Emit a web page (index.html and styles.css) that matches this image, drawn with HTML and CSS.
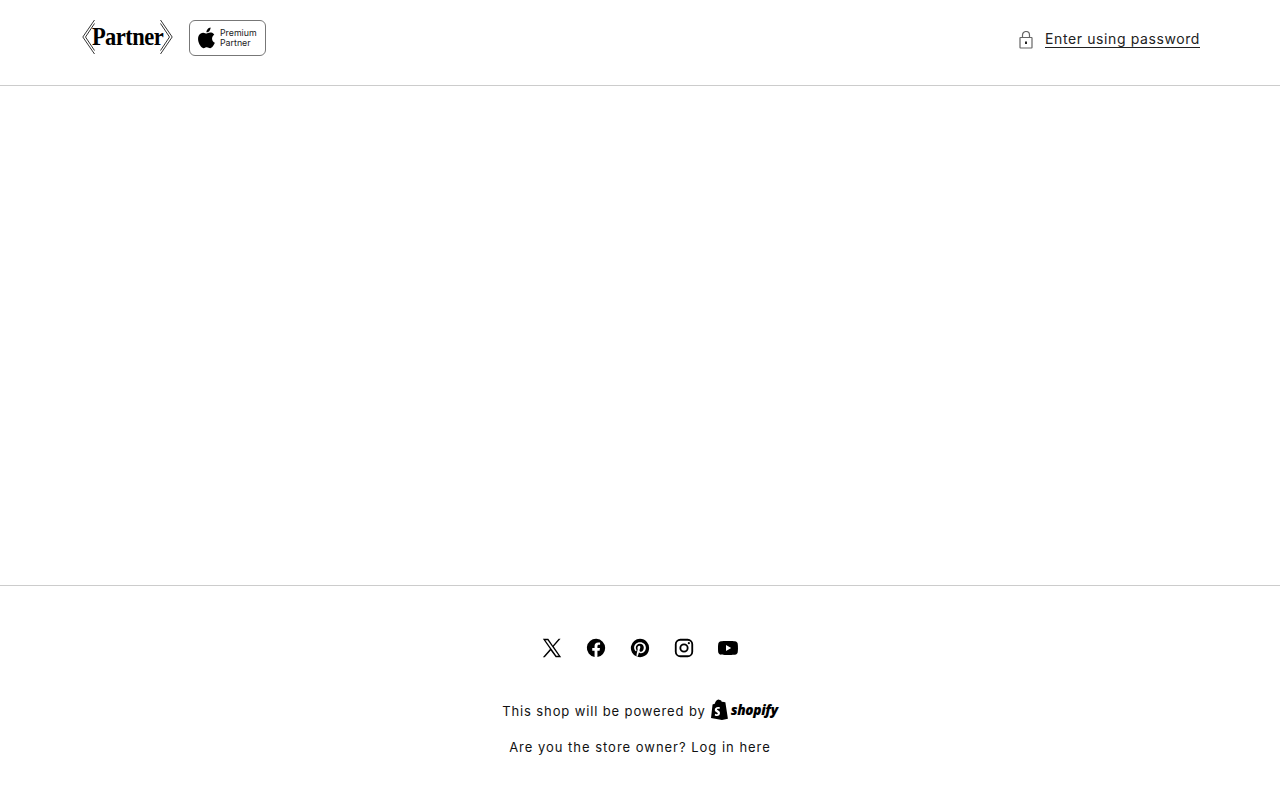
FILE: index.html
```html
<!DOCTYPE html>
<html>
<head>
<meta charset="utf-8">
	<title>Partner</title>
	<link rel="stylesheet" href="styles.css">
</head>
<body>
	<header class="header">
		<div class="logo">
			<div class="wordmark">
				<svg class="chevron" viewBox="0 0 13 34" width="13" height="34" fill="none" stroke="#000" stroke-width="0.8"><path d="M12.500 0 .8 17l11.700 17M12.500 3.500 3.500 17l9 13.500"/></svg>
				<span class="wordmark-text">Partner</span>
				<svg class="chevron" viewBox="0 0 13 34" width="13" height="34" fill="none" stroke="#000" stroke-width="0.8"><path d="M.5 0l11.700 17L.5 34M.5 3.500l9 13.500-9 13.500"/></svg>
			</div>
			<div class="badge">
				<svg class="apple" viewBox="0 0 24 24" width="24" height="24" fill="#000"><path d="M17.050 12.540c-.03-2.600 2.120-3.850 2.220-3.910-1.210-1.770-3.090-2.010-3.760-2.040-1.600-.16-3.120.94-3.930.94-.81 0-2.060-.92-3.390-.89-1.740.03-3.350 1.010-4.250 2.570-1.810 3.140-.46 7.800 1.300 10.350.86 1.250 1.890 2.650 3.240 2.600 1.300-.05 1.790-.84 3.360-.84 1.570 0 2.010.84 3.390.81 1.400-.02 2.280-1.270 3.140-2.520.99-1.450 1.400-2.850 1.420-2.920-.03-.01-2.720-1.040-2.740-4.150zM14.470 4.900c.72-.87 1.200-2.080 1.070-3.280-1.030.04-2.280.69-3.020 1.550-.66.770-1.240 2-1.090 3.180 1.150.09 2.330-.58 3.040-1.450z"/></svg>
				<span class="badge-text">Premium<br>Partner</span>
			</div>
		</div>
		<a class="password" href="#">
			<svg class="lock" viewBox="0 0 14 18" width="14" height="18" fill="none" stroke="#666" stroke-width="1.200"><rect x="1" y="6.500" width="12" height="10.500" rx="0.500"/><path d="M3.500 6.500V4a3.500 3.500 0 0 1 7 0v2.500"/><path d="M7 10.500v2.500" stroke="#222" stroke-width="2"/></svg>
			<span class="password-text">Enter using password</span>
		</a>
	</header>

	<main class="main"></main>

	<footer class="footer">
		<div class="social">
			<a href="#"><svg viewBox="0 0 24 24" width="22" height="22" fill="#000"><path fill-rule="evenodd" d="M13.900 10.470 21.350 2h-2.100l-6.300 7.150L7.950 2H2l7.810 11.130L2 22h2.100l6.500-7.400L16.050 22H22l-8.100-11.530zM4.800 3.600h2.400l12 16.900h-2.400L4.800 3.600z"/></svg></a>
			<a href="#"><svg viewBox="0 0 24 24" width="22" height="22" fill="#000"><path d="M22 12a10 10 0 1 0-11.560 9.880v-6.990H7.900V12h2.540V9.800c0-2.510 1.490-3.890 3.780-3.890 1.090 0 2.240.19 2.240.19v2.460h-1.260c-1.240 0-1.630.77-1.630 1.560V12h2.770l-.44 2.890h-2.330v6.990A10 10 0 0 0 22 12z"/></svg></a>
			<a href="#"><svg viewBox="0 0 24 24" width="22" height="22" fill="#000"><path d="M12 2a10 10 0 0 0-3.640 19.310c-.09-.79-.17-2 .03-2.870.18-.78 1.170-4.970 1.170-4.970s-.3-.6-.3-1.480c0-1.390.81-2.430 1.810-2.430.86 0 1.270.64 1.270 1.410 0 .86-.55 2.140-.83 3.330-.24 1 .5 1.810 1.480 1.810 1.780 0 3.150-1.880 3.150-4.590 0-2.400-1.730-4.080-4.190-4.080-2.850 0-4.530 2.140-4.530 4.350 0 .86.33 1.790.75 2.290.08.1.09.19.07.29l-.28 1.130c-.04.18-.15.22-.34.13-1.250-.58-2.030-2.410-2.030-3.880 0-3.160 2.300-6.060 6.620-6.060 3.480 0 6.180 2.480 6.180 5.790 0 3.450-2.180 6.240-5.200 6.240-1.020 0-1.970-.53-2.300-1.150l-.62 2.380c-.23.870-.84 1.960-1.250 2.620A10 10 0 1 0 12 2z"/></svg></a>
			<a href="#"><svg viewBox="0 0 24 24" width="22" height="22" fill="none" stroke="#000" stroke-width="2"><rect x="3" y="3" width="18" height="18" rx="5"/><circle cx="12" cy="12" r="4"/><circle cx="17.300" cy="6.700" r="1.200" fill="#000" stroke="none"/></svg></a>
			<a href="#"><svg viewBox="1 1 22 22" width="22" height="22" fill="#000"><path fill-rule="evenodd" d="M21.600 7.200c-.23-.86-.9-1.530-1.760-1.760C18.280 5 12 5 12 5s-6.280 0-7.840.44c-.86.23-1.530.9-1.760 1.760C2 8.770 2 12 2 12s0 3.230.4 4.800c.23.860.9 1.530 1.760 1.760C5.720 19 12 19 12 19s6.280 0 7.840-.44c.86-.23 1.530-.9 1.760-1.760.4-1.570.4-4.800.4-4.800s0-3.230-.4-4.800zM10 15V9l5.200 3-5.200 3z"/></svg></a>
		</div>
		<p class="powered">
			<span class="powered-text">This shop will be powered by</span>
			<span class="shopify">
				<svg viewBox="0 0 20 22" width="20" height="22"><path d="M13.600 2.800 12.900 3c-.4-1.200-1-2-2-2h-.2C10.400.6 10 .4 9.700.4 7.300.4 6.200 3.300 5.800 4.800l-1.700.5c-.5.2-.5.200-.6.700L2 19l11 2 5.900-1.300L16.400 3.400c0-.1-.1-.2-.2-.2l-2.600-.4z" fill="#000"/><path d="M11 8.500c-.7-.3-1.300-.4-1.900-.4-2.300 0-3.300 1.500-3.300 2.800 0 2.200 3 2.200 3 3.500 0 .4-.3.800-1 .8-.8 0-1.700-.5-1.700-.5l-.4 1.700s.9.600 2.200.6c1.900 0 3.100-1.300 3.100-3 0-2.300-3-2.500-3-3.400 0-.2.200-.8 1.200-.8.600 0 1.200.2 1.200.2L11 8.500z" fill="#fff"/></svg>
				<span class="shopify-text">shopify</span>
			</span>
		</p>
		<p class="owner">Are you the store owner? <a href="#">Log in here</a></p>
	</footer>
</body>
</html>
```

FILE: styles.css
```css
*{
	margin: 0;
	padding: 0;
	box-sizing: border-box;
}
body{
	height: 800px;
	display: flex;
	flex-direction: column;
	background: #fff;
	color: #111;
	font-family: Inter, "Liberation Sans", sans-serif;
	overflow: hidden;
}
a{
	color: inherit;
	text-decoration: none;
}
.header{
	height: 86px;
	padding: 0 80px 0 82px;
	display: flex;
	align-items: center;
	justify-content: space-between;
	border-bottom: 1px solid #ccc;
}
.logo{
	display: flex;
	align-items: flex-start;
	gap: 16px;
	margin-top: -9px;
}
.wordmark{
	width: 91px;
	display: flex;
	align-items: center;
	justify-content: space-between;
}
.chevron{
	flex: none;
}
.wordmark-text{
	flex: none;
	width: 65px;
	display: flex;
	justify-content: center;
	font-family: "Liberation Serif", serif;
	font-weight: bold;
	font-size: 25px;
	letter-spacing: -0.6px;
	line-height: 34px;
	color: #000;
	transform: scaleX(0.9);
}
.badge{
	width: 77px;
	height: 36px;
	border: 1px solid #777;
	border-radius: 6px;
	display: flex;
	align-items: center;
	padding-left: 5px;
	gap: 1px;
}
.badge-text{
	font-size: 8.800px;
	line-height: 10.500px;
	color: #222;
}
.password{
	display: flex;
	align-items: center;
	gap: 12px;
	margin-top: -7px;
}
.lock{
	margin-top: 2px;
}
.password-text{
	font-size: 14px;
	letter-spacing: 0.6px;
	line-height: 17px;
	color: #222;
	border-bottom: 1px solid #222;
}
.main{
	height: 499px;
}
.footer{
	flex: 1;
	border-top: 1px solid #ccc;
	display: flex;
	flex-direction: column;
	align-items: center;
	font-size: 13px;
	letter-spacing: 0.9px;
	color: #111;
}
.social{
	display: flex;
	gap: 22px;
	margin-top: 51px;
}
.social a{
	display: block;
	width: 22px;
	height: 22px;
}
.social svg{
	display: block;
}
.powered{
	display: flex;
	align-items: center;
	gap: 3px;
	margin-top: 41px;
	height: 22px;
}
.powered-text{
	letter-spacing: 0.87px;
}
.shopify{
	display: flex;
	align-items: center;
	gap: 2px;
	margin-top: -3px;
}
.shopify-text{
	font-family: "Open Sans", sans-serif;
	font-weight: 800;
	font-style: italic;
	font-size: 13.600px;
	letter-spacing: -0.3px;
	color: #000;
}
.owner{
	margin-top: 15px;
	line-height: 20px;
	letter-spacing: 0.98px;
}
```
